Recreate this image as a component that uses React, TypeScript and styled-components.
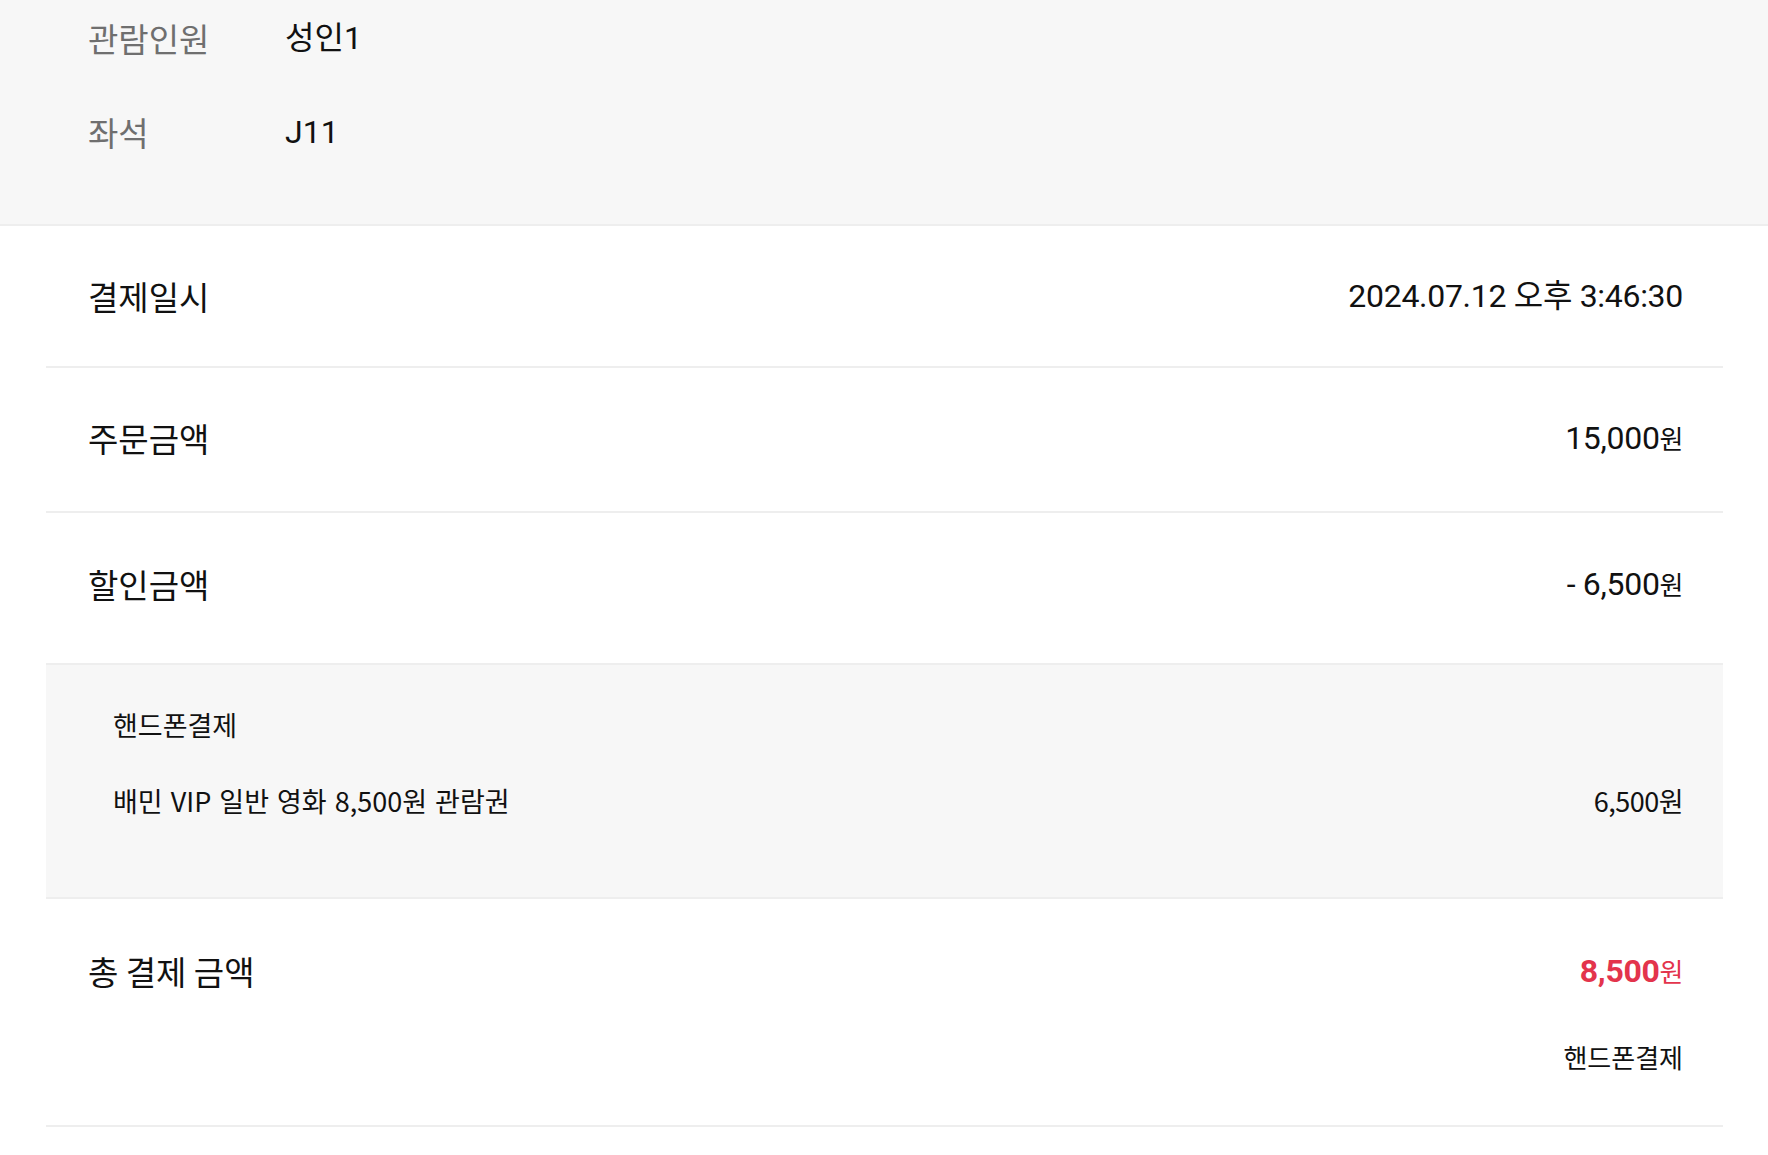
import React from "react";
import styled, { createGlobalStyle } from "styled-components";

const GlobalStyle = createGlobalStyle`
  *, *::before, *::after { box-sizing: border-box; }
  html, body { margin: 0; padding: 0; background: #ffffff; }
  body {
    font-family: Roboto, "Noto Sans CJK KR", sans-serif;
    color: #111111;
    -webkit-font-smoothing: antialiased;
  }
`;

const Page = styled.main`
  width: 100%;
  min-height: 1155px;
  background: #ffffff;
`;

const TopInfo = styled.section`
  background: #f7f7f7;
  border-bottom: 2px solid #eeeeee;
  padding: 0 0 54px 88px;
  display: flex;
  flex-direction: column;
  gap: 18px;
`;

const InfoRow = styled.div`
  display: grid;
  grid-template-columns: 197px 1fr;
  align-items: center;
  height: 76px;
`;

const InfoLabel = styled.span`
  font-family: "Noto Sans CJK KR", sans-serif;
  font-size: 33px;
  color: #6f6f6f;
  line-height: 1;
`;

const InfoValue = styled.span`
  font-family: Roboto, "Noto Sans CJK KR", sans-serif;
  font-size: 32px;
  color: #111111;
  line-height: 1;
`;

const List = styled.div`
  padding: 0 45px 0 46px;
`;

const SummaryRow = styled.div<{ $h: number; $pb?: number }>`
  display: flex;
  justify-content: space-between;
  align-items: center;
  height: ${(p) => p.$h}px;
  padding: 0 40px ${(p) => p.$pb ?? 0}px 42px;
  border-bottom: 2px solid #eeeeee;
`;

const RowLabel = styled.span`
  font-family: "Noto Sans CJK KR", sans-serif;
  font-size: 33px;
  color: #111111;
  line-height: 44px;
`;

const RowValue = styled.span`
  font-family: Roboto, "Noto Sans CJK KR", sans-serif;
  font-size: 32px;
  color: #111111;
  line-height: 44px;
  letter-spacing: -0.3px;
`;

const Unit = styled.span`
  font-family: "Noto Sans CJK KR", sans-serif;
  font-size: 26px;
  letter-spacing: -0.5px;
`;

const DetailBox = styled.div`
  background: #f7f7f7;
  border-bottom: 2px solid #eeeeee;
  padding: 37px 40px 75px 67px;
  display: flex;
  flex-direction: column;
  gap: 32px;
`;

const DetailLine = styled.div`
  display: flex;
  justify-content: space-between;
  align-items: center;
  height: 44px;
  font-family: "Noto Sans CJK KR", sans-serif;
  font-size: 27px;
  color: #111111;
`;

const DetailName = styled.span`
  word-spacing: 2px;
`;

const DetailPrice = styled.span`
  letter-spacing: -0.5px;
`;

const TotalRow = styled.div`
  display: flex;
  justify-content: space-between;
  align-items: flex-start;
  padding: 50px 40px 46px 42px;
  border-bottom: 2px solid #eeeeee;
`;

const TotalRight = styled.div`
  display: flex;
  flex-direction: column;
  align-items: flex-end;
  gap: 42px;
`;

const TotalAmount = styled.span`
  font-family: Roboto, "Noto Sans CJK KR", sans-serif;
  font-size: 32px;
  font-weight: 700;
  color: #e3344c;
  line-height: 44px;
  letter-spacing: -0.3px;
`;

const TotalUnit = styled.span`
  font-family: "Noto Sans CJK KR", sans-serif;
  font-weight: 400;
  font-size: 26px;
  letter-spacing: -0.5px;
`;

const PayMethod = styled.span`
  font-family: "Noto Sans CJK KR", sans-serif;
  font-size: 26px;
  color: #111111;
  line-height: 44px;
`;

export default function App() {
  return (
    <Page>
      <GlobalStyle />
      <TopInfo>
        <InfoRow>
          <InfoLabel>관람인원</InfoLabel>
          <InfoValue>성인1</InfoValue>
        </InfoRow>
        <InfoRow>
          <InfoLabel>좌석</InfoLabel>
          <InfoValue>J11</InfoValue>
        </InfoRow>
      </TopInfo>
      <List>
        <SummaryRow $h={142}>
          <RowLabel>결제일시</RowLabel>
          <RowValue>2024.07.12 오후 3:46:30</RowValue>
        </SummaryRow>
        <SummaryRow $h={145} $pb={3}>
          <RowLabel>주문금액</RowLabel>
          <RowValue>
            15,000<Unit>원</Unit>
          </RowValue>
        </SummaryRow>
        <SummaryRow $h={152} $pb={8}>
          <RowLabel>할인금액</RowLabel>
          <RowValue>
            - 6,500<Unit>원</Unit>
          </RowValue>
        </SummaryRow>
        <DetailBox>
          <DetailLine>
            <span>핸드폰결제</span>
          </DetailLine>
          <DetailLine>
            <DetailName>배민 VIP 일반 영화 8,500원 관람권</DetailName>
            <DetailPrice>6,500원</DetailPrice>
          </DetailLine>
        </DetailBox>
        <TotalRow>
          <RowLabel>총 결제 금액</RowLabel>
          <TotalRight>
            <TotalAmount>
              8,500<TotalUnit>원</TotalUnit>
            </TotalAmount>
            <PayMethod>핸드폰결제</PayMethod>
          </TotalRight>
        </TotalRow>
      </List>
    </Page>
  );
}
